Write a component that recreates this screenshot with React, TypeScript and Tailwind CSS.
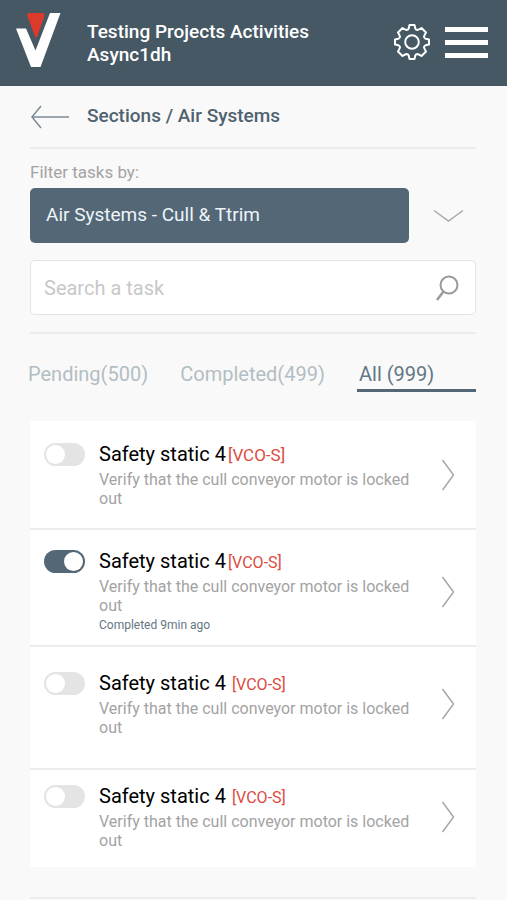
import { useState } from "react";

type Task = {
  id: number;
  title: string;
  code: string;
  description: string;
  completedAt?: string;
  done: boolean;
  spacing: string;
  codeClass: string;
};

const initialTasks: Task[] = [
  {
    id: 1,
    title: "Safety static 4",
    code: "[VCO-S]",
    description: "Verify that the cull conveyor motor is locked out",
    done: false,
    spacing: "pt-[21px] pb-5",
    codeClass: "ml-0.5 text-[17px]",
  },
  {
    id: 2,
    title: "Safety static 4",
    code: "[VCO-S]",
    description: "Verify that the cull conveyor motor is locked out",
    completedAt: "Completed 9min ago",
    done: true,
    spacing: "pt-[19px] pb-2.5",
    codeClass: "ml-0.5 text-[16px]",
  },
  {
    id: 3,
    title: "Safety static 4",
    code: "[VCO-S]",
    description: "Verify that the cull conveyor motor is locked out",
    done: false,
    spacing: "pt-6 pb-[31px]",
    codeClass: "ml-1.5 text-[16px]",
  },
  {
    id: 4,
    title: "Safety static 4",
    code: "[VCO-S]",
    description: "Verify that the cull conveyor motor is locked out",
    done: false,
    spacing: "pt-3.5 pb-[17px]",
    codeClass: "ml-1.5 text-[16px]",
  },
];

const Logo = () => (
  <svg viewBox="0 0 46 56" className="h-14 w-[46px]" aria-hidden>
    <path d="M1 16.500H11L20.500 38.500L35 1H45.500L25.500 55H16Z" fill="#ffffff" />
    <path d="M12 3C12 1.500 13 1 14.500 1H27C29 1 30 2 29.500 4L22 25Q21 26 20 24.500Z" fill="#dc3a2b" />
  </svg>
);

const GearIcon = () => (
  <svg
    viewBox="-19 -19 38 38"
    className="size-[38px]"
    fill="none"
    stroke="currentColor"
    strokeWidth="2"
    strokeLinejoin="round"
    aria-hidden
  >
    <circle r="6.800" />
    <path d="M-2.500 -17H2.500L3.300 -13.500Q4 -12 5.500 -12Q7 -12.500 9.500 -14L14 -9.500Q12.500 -7 12 -5.500Q12 -4 13.500 -3.300L17 -2.500V2.500L13.500 3.300Q12 4 12 5.500Q12.500 7 14 9.500L9.500 14Q7 12.500 5.500 12Q4 12 3.300 13.500L2.500 17H-2.500L-3.300 13.500Q-4 12 -5.500 12Q-7 12.500 -9.500 14L-14 9.500Q-12.500 7 -12 5.500Q-12 4 -13.500 3.300L-17 2.500V-2.500L-13.500 -3.300Q-12 -4 -12 -5.500Q-12.500 -7 -14 -9.500L-9.500 -14Q-7 -12.500 -5.500 -12Q-4 -12 -3.300 -13.500Z" />
  </svg>
);

const TaskRow = ({ task, onToggle }: { task: Task; onToggle: () => void }) => (
  <li className={`flex gap-3.5 pl-3.5 pr-[21px] ${task.spacing}`}>
    <input
      id={`task-${task.id}`}
      type="checkbox"
      checked={task.done}
      onChange={onToggle}
      className="mt-px h-[23px] w-[41px] shrink-0 cursor-pointer appearance-none rounded-full bg-[#e4e4e4] p-0.5 before:block before:size-[19px] before:rounded-full before:bg-white checked:bg-[#536777] checked:before:ml-[18px]"
    />
    <div className="min-w-0 flex-1">
      <label htmlFor={`task-${task.id}`} className="block text-xl leading-6 text-black">
        {task.title}
        <span className={`leading-none text-[#dc4b3e] ${task.codeClass}`}>{task.code}</span>
      </label>
      <p className="mt-1 text-base leading-[19px] text-[#a3a3a3]">{task.description}</p>
      {task.completedAt && <p className="text-xs leading-5 text-[#647684]">{task.completedAt}</p>}
    </div>
    <button type="button" aria-label="Open task" className="shrink-0 self-center">
      <svg viewBox="0 0 14 32" className="h-8 w-3.5" fill="none" stroke="#a8a8a8" strokeWidth="1.500" aria-hidden>
        <path d="M1.500 1L12.500 16L1.500 31" />
      </svg>
    </button>
  </li>
);

export default function App() {
  const [tasks, setTasks] = useState(initialTasks);

  const toggle = (id: number) =>
    setTasks((prev) => prev.map((t) => (t.id === id ? { ...t, done: !t.done } : t)));

  return (
    <div className="min-h-screen bg-[#f9f9f9] font-['Roboto',sans-serif]">
      <header className="flex h-[86px] items-start bg-[#455864] pl-[15px] pr-[19px] text-white">
        <div className="mt-3 shrink-0">
          <Logo />
        </div>
        <h1 className="ml-[26px] mt-5 max-w-[260px] flex-1 text-[19px] font-medium leading-[23px]">
          Testing Projects Activities Async1dh
        </h1>
        <div className="ml-auto mt-[23px] flex items-center gap-3.5">
          <button type="button" aria-label="Settings">
            <GearIcon />
          </button>
          <button type="button" aria-label="Menu" className="flex w-[43px] flex-col gap-2">
            <span className="h-[5px] bg-white" />
            <span className="h-[5px] bg-white" />
            <span className="h-[5px] bg-white" />
          </button>
        </div>
      </header>

      <main className="pl-[30px] pr-[31px]">
        <div className="flex h-[63px] items-center gap-[17px] border-b-2 border-[#ececec]">
          <a href="#sections" aria-label="Back to sections">
            <svg viewBox="0 0 40 24" className="h-6 w-10" fill="none" stroke="#7d8b95" strokeWidth="1.500" aria-hidden>
              <path d="M39 12H2M11 1L2 12L11 23" />
            </svg>
          </a>
          <h2 className="text-[19px] font-medium text-[#4f626f]">Sections / Air Systems</h2>
        </div>

        <label htmlFor="filter" className="mt-[11px] block text-[17px] leading-6 text-[#a3a3a3]">
          Filter tasks by:
        </label>
        <div className="mt-1 flex items-center gap-6">
          <select
            id="filter"
            className="h-[55px] min-w-0 flex-1 appearance-none rounded-[5px] bg-[#536777] px-4 text-[19px] text-[#eef4f8]"
          >
            <option>Air Systems - Cull &amp; Ttrim</option>
          </select>
          <button type="button" aria-label="Show filters" className="mr-3">
            <svg viewBox="0 0 31 14" className="h-3.5 w-[31px]" fill="none" stroke="#a8a8a8" strokeWidth="1.500" aria-hidden>
              <path d="M1 1.500L15.500 12L30 1.500" />
            </svg>
          </button>
        </div>

        <div className="mt-[17px] flex h-[55px] items-center rounded-[5px] border border-[#e4e4e4] bg-white px-[13px]">
          <input
            type="search"
            aria-label="Search a task"
            placeholder="Search a task"
            className="min-w-0 flex-1 text-xl text-[#536777] outline-none placeholder:text-[#c8c8c8]"
          />
          <button type="button" aria-label="Search" className="pr-0.5">
            <svg viewBox="0 0 26 28" className="h-7 w-[26px]" fill="none" stroke="#999999" strokeWidth="2" aria-hidden>
              <circle cx="15" cy="11" r="8.500" />
              <path d="M9.500 17.500L3 26" strokeWidth="2.500" />
            </svg>
          </button>
        </div>

        <hr className="mt-[17px] border-t-2 border-[#ececec]" />

        <div role="tablist" className="-ml-0.5 mt-7 flex justify-between text-xl leading-6 text-[#b2bec4]">
          <button type="button" role="tab" aria-selected={false} className="pb-1.5">
            Pending(500)
          </button>
          <button type="button" role="tab" aria-selected={false} className="pb-1.5">
            Completed(499)
          </button>
          <button
            type="button"
            role="tab"
            aria-selected={true}
            className="w-[119px] border-b-[3px] border-[#536777] pb-[3px] pl-0.5 text-left text-[#647684]"
          >
            All (999)
          </button>
        </div>

        <ul className="mt-[29px] divide-y-2 divide-[#ececec] rounded-[3px] bg-white">
          {tasks.map((task) => (
            <TaskRow key={task.id} task={task} onToggle={() => toggle(task.id)} />
          ))}
        </ul>
        <hr className="mt-[30px] border-t-2 border-[#ececec]" />
      </main>
    </div>
  );
}
